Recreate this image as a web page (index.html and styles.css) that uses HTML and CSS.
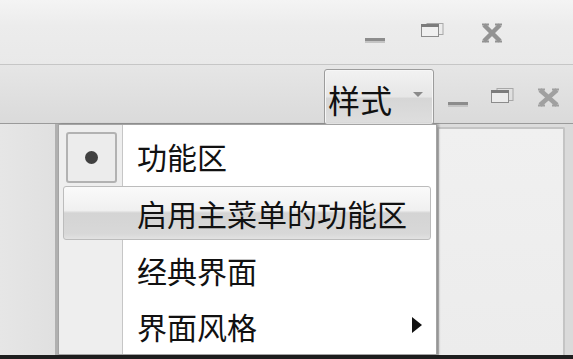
FILE: index.html
```html
<!DOCTYPE html>
<html lang="zh">
<head>
<meta charset="utf-8">
<title>样式</title>
<link rel="stylesheet" href="styles.css">
</head>
<body>
<div class="app">
  <div class="titlebar">
    <div class="controls top-controls">
      <svg class="ic-min" width="20" height="6" viewBox="0 0 20 6"><rect x="0" y="0" width="20" height="3" fill="#8c8c8c"/><rect x="0" y="3" width="20" height="2" fill="#c4c4c4"/></svg>
      <svg class="ic-restore" width="23" height="14" viewBox="0 0 23 14"><rect x="6" y="0.5" width="16" height="11" fill="none" stroke="#a8a8a8"/><rect x="0.5" y="1.5" width="17" height="12" fill="#f0f0f0" stroke="#8c8c8c"/><rect x="0" y="1" width="18" height="3" fill="#7c7c7c"/></svg>
      <svg class="ic-close" width="22" height="20" viewBox="0 0 22 20"><path d="M3 2 L19 18 M19 2 L3 18" stroke="#939393" stroke-width="4.5" stroke-linecap="butt"/><path d="M1 1.5h7M14 1.5h7M1 18.5h7M14 18.5h7" stroke="#939393" stroke-width="2"/></svg>
    </div>
  </div>
  <div class="ribbonbar">
    <div class="style-btn">
      <span class="style-label">样式</span>
      <svg class="style-arrow" width="10" height="5" viewBox="0 0 10 5"><path d="M0 0h10L5 5z" fill="#8a8a8a"/></svg>
    </div>
    <div class="controls rib-controls">
      <svg class="ic-min2" width="20" height="5" viewBox="0 0 20 5"><rect x="0" y="0" width="20" height="3" fill="#8c8c8c"/><rect x="0" y="3" width="20" height="2" fill="#c4c4c4"/></svg>
      <svg class="ic-restore2" width="23" height="15" viewBox="0 0 23 15"><rect x="6" y="0.5" width="16" height="12" fill="none" stroke="#a8a8a8"/><rect x="0.5" y="2.5" width="17" height="12" fill="#ececec" stroke="#8c8c8c"/><rect x="0" y="2" width="18" height="3" fill="#7c7c7c"/></svg>
      <svg class="ic-close2" width="23" height="19" viewBox="0 0 23 19"><path d="M3 2 L20 17 M20 2 L3 17" stroke="#a0a0a0" stroke-width="4.5"/><path d="M1 1.5h7M15 1.5h7M1 17.5h7M15 17.5h7" stroke="#a0a0a0" stroke-width="2"/></svg>
    </div>
  </div>
  <div class="workspace">
    <div class="leftpane"></div>
    <div class="center"></div>
    <div class="rightpane"></div>
    <div class="rightgap"></div>

    <div class="menu">
      <div class="menu-item">
        <div class="menu-icon"><div class="radio-box"><span class="dot"></span></div></div>
        <div class="menu-text">功能区</div>
      </div>
      <div class="menu-item hover">
        <div class="menu-icon"></div>
        <div class="menu-text">启用主菜单的功能区</div>
      </div>
      <div class="menu-item">
        <div class="menu-icon"></div>
        <div class="menu-text">经典界面</div>
      </div>
      <div class="menu-item">
        <div class="menu-icon"></div>
        <div class="menu-text">界面风格</div>
        <svg class="submenu-arrow" width="10" height="16" viewBox="0 0 10 16"><path d="M0 0L10 8L0 16z" fill="#111"/></svg>
      </div>
    </div>
  </div>
</div>
</body>
</html>
```

FILE: styles.css
```css
* { box-sizing: border-box; }
html, body { margin: 0; padding: 0; }
body {
  width: 573px;
  height: 359px;
  overflow: hidden;
  font-family: "Noto Sans CJK SC", "Noto Sans", sans-serif;
  background: #e4e4e4;
  color: #111;
}
.app { width: 573px; height: 359px; display: flex; flex-direction: column; }

.titlebar {
  height: 65px;
  background: linear-gradient(#f4f4f4, #ececec 40%, #e9e9e9);
  border-bottom: 1px solid #c6c6c6;
  display: flex;
  justify-content: flex-end;
}
.controls { display: flex; align-items: flex-start; }
.top-controls { padding: 23px 70px 0 0; }
.ic-min { margin-top: 15px; margin-right: 36px; }
.ic-restore { margin-top: 0; margin-right: 37px; }

.ribbonbar {
  height: 59px;
  background: linear-gradient(#e6e6e6, #e0e0e0 50%, #dadada);
  border-bottom: 1px solid #9a9a9a;
  display: flex;
  align-items: flex-start;
  justify-content: flex-end;
  position: relative;
}
.style-btn {
  margin-top: 4px;
  width: 110px;
  height: 56px;
  border: 1px solid #9c9c9c;
  border-radius: 3px;
  background: linear-gradient(#f2f2f2, #e6e6e6 50%, #d6d6d6 52%, #dedede);
  box-shadow: inset 0 0 0 1px #f6f6f6;
  display: flex;
  align-items: center;
  padding-left: 3px;
  position: relative;
  z-index: 2;
}
.style-label { font-size: 32px; line-height: 1; letter-spacing: 0; margin-top: 4px; }
.style-arrow { margin-left: 21px; margin-top: -6px; }
.rib-controls { padding: 23px 13px 0 14px; }
.ic-min2 { margin-top: 14px; margin-right: 23px; }
.ic-restore2 { margin-top: 0; margin-right: 23px; }
.ic-close2 { margin-top: 0; }

.workspace {
  flex: 1;
  display: flex;
  position: relative;
  border-bottom: 4px solid #1e1e1e;
  background: #dcdcdc;
}
.leftpane {
  width: 58px;
  background: linear-gradient(90deg, #e6e6e6, #e0e0e0);
  border-right: 3px solid #b0b0b0;
}
.center { flex: 1; background: #f2f2f2; }
.rightpane {
  width: 128px;
  margin-top: 3px;
  background: linear-gradient(#f0f0f0, #ececec);
  border: 2px solid #c4c4c4;
  border-bottom: 0;
  border-radius: 2px 2px 0 0;
}
.rightgap { width: 8px; background: #dadada; }

.menu {
  position: absolute;
  left: 58px;
  top: 0;
  width: 379px;
  height: 231px;
  background: linear-gradient(90deg, #eeeeee 0, #eeeeee 63px, #c6c6c6 63px, #c6c6c6 64px, #fff 64px);
  border: 1px solid #a4a4a4;
  box-shadow: 2px 0 2px rgba(0,0,0,0.25);
  padding: 3px 3px 0 3px;
  display: flex;
  flex-direction: column;
  z-index: 3;
}
.menu-item {
  height: 57px;
  display: flex;
  align-items: center;
  position: relative;
}
.menu-icon {
  width: 61px;
  height: 100%;
  display: flex;
  align-items: center;
  justify-content: flex-start;
}
.radio-box {
  width: 51px;
  height: 51px;
  border: 2px solid #b2b2b2;
  border-radius: 3px;
  background: #ececec;
  display: flex;
  align-items: center;
  justify-content: center;
  margin-left: 4px;
  margin-top: 2px;
}
.dot {
  width: 13px;
  height: 13px;
  border-radius: 50%;
  background: #404040;
}
.menu-text {
  font-size: 30px;
  line-height: 1;
  padding-left: 14px;
  flex: 1;
  white-space: nowrap;
}
.menu-item.hover {
  height: 54px;
  margin: 2px 2px 2px 1px;
  border: 1px solid #bcbcbc;
  border-radius: 3px;
  background: linear-gradient(#fafafa, #f0f0f0 45%, #d4d4d4 50%, #d8d8d8 90%, #e2e2e2);
}
.menu-item.hover .menu-icon { width: 59px; }
.submenu-arrow { position: absolute; right: 11px; top: 19px; }
```
